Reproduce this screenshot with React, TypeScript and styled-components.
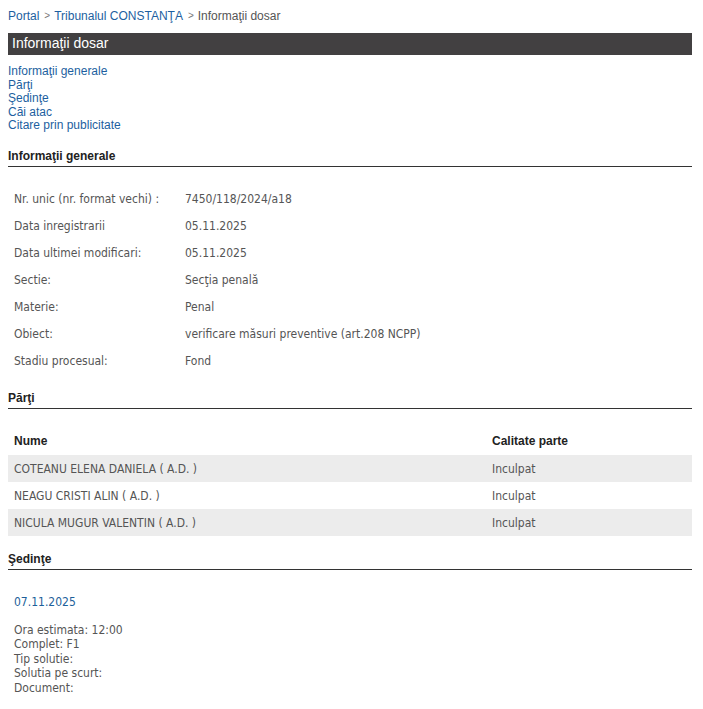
import React from "react";
import styled, { createGlobalStyle } from "styled-components";

const GlobalStyle = createGlobalStyle`
  body {
    margin: 0;
    background: #fff;
    font-family: "Liberation Sans", Arial, sans-serif;
    font-size: 12px;
  }
`;

const Page = styled.div`
  padding: 9px 11px 20px 8px;
`;

const Crumbs = styled.div`
  display: flex;
  align-items: center;
  gap: 4px;
  color: #555;
  font-size: 12px;
  line-height: 14px;
`;

const Link = styled.a`
  color: #1d5fa0;
  text-decoration: none;
  cursor: pointer;
`;

const Sep = styled.span`
  color: #777;
  font-size: 10px;
  padding-left: 1px;
`;

const TitleBar = styled.div`
  margin-top: 10px;
  height: 22px;
  padding-left: 4px;
  background: #424041;
  color: #fff;
  font-size: 14px;
  line-height: 20px;
`;

const Nav = styled.nav`
  display: flex;
  flex-direction: column;
  margin-top: 10px;
  line-height: 13.5px;
`;

const SectionTitle = styled.h2<{ $gap?: number }>`
  margin: ${(p) => p.$gap ?? 17}px 0 0;
  padding-bottom: 2px;
  border-bottom: 1px solid #333;
  color: #222;
  font-size: 12px;
  font-weight: bold;
  line-height: 15px;
`;

const Table = styled.table<{ $gap?: number }>`
  width: 100%;
  table-layout: fixed;
  border-collapse: collapse;
  margin-top: ${(p) => p.$gap ?? 18}px;
  font-family: "DejaVu Sans Condensed", "DejaVu Sans", sans-serif;
  font-stretch: condensed;
  font-size: 12px;
  color: #555;
`;

const Col = styled.col<{ $width?: number }>`
  width: ${(p) => (p.$width ? `${p.$width}px` : "auto")};
`;

const Cell = styled.td`
  height: 26px;
  padding: 1px 6px 0;
  vertical-align: middle;
  white-space: nowrap;
`;

const HeadCell = styled.th`
  height: 26px;
  padding: 0 6px 1px;
  text-align: left;
  font-family: "Liberation Sans", Arial, sans-serif;
  font-weight: bold;
  color: #222;
`;

const Row = styled.tr<{ $shaded?: boolean }>`
  background: ${(p) => (p.$shaded ? "#ececec" : "transparent")};
`;

const Session = styled.div`
  padding: 25px 6px 0;
  font-family: "DejaVu Sans Condensed", "DejaVu Sans", sans-serif;
  font-stretch: condensed;
  font-size: 12px;
  color: #555;
`;

const SessionDate = styled.div`
  color: #1d5f9a;
  line-height: 15px;
`;

const SessionLines = styled.div`
  margin-top: 13px;
  line-height: 14.5px;
`;

const general: [string, string][] = [
  ["Nr. unic (nr. format vechi) :", "7450/118/2024/a18"],
  ["Data inregistrarii", "05.11.2025"],
  ["Data ultimei modificari:", "05.11.2025"],
  ["Sectie:", "Secţia penală"],
  ["Materie:", "Penal"],
  ["Obiect:", "verificare măsuri preventive (art.208 NCPP)"],
  ["Stadiu procesual:", "Fond"],
];

const parties = [
  "COTEANU ELENA DANIELA ( A.D. )",
  "NEAGU CRISTI ALIN ( A.D. )",
  "NICULA MUGUR VALENTIN ( A.D. )",
];

export default function App() {
  return (
    <>
      <GlobalStyle />
      <Page>
        <Crumbs>
          <Link>Portal</Link>
          <Sep>&gt;</Sep>
          <Link>Tribunalul CONSTANŢA</Link>
          <Sep>&gt;</Sep>
          <span>Informaţii dosar</span>
        </Crumbs>

        <TitleBar>Informaţii dosar</TitleBar>

        <Nav>
          <Link>Informaţii generale</Link>
          <Link>Părţi</Link>
          <Link>Şedinţe</Link>
          <Link>Căi atac</Link>
          <Link>Citare prin publicitate</Link>
        </Nav>

        <SectionTitle $gap={16}>Informaţii generale</SectionTitle>
        <Table>
          <colgroup>
            <Col $width={171} />
            <Col />
          </colgroup>
          <tbody>
            {general.map(([label, value]) => (
              <Row key={label}>
                <Cell>{label}</Cell>
                <Cell>{value}</Cell>
              </Row>
            ))}
          </tbody>
        </Table>

        <SectionTitle>Părţi</SectionTitle>
        <Table $gap={19}>
          <colgroup>
            <Col $width={478} />
            <Col />
          </colgroup>
          <thead>
            <tr>
              <HeadCell>Nume</HeadCell>
              <HeadCell>Calitate parte</HeadCell>
            </tr>
          </thead>
          <tbody>
            {parties.map((name, i) => (
              <Row key={name} $shaded={i % 2 === 0}>
                <Cell>{name}</Cell>
                <Cell>Inculpat</Cell>
              </Row>
            ))}
          </tbody>
        </Table>

        <SectionTitle $gap={16}>Şedinţe</SectionTitle>
        <Session>
          <SessionDate>07.11.2025</SessionDate>
          <SessionLines>
            <div>Ora estimata: 12:00</div>
            <div>Complet: F1</div>
            <div>Tip solutie:</div>
            <div>Solutia pe scurt:</div>
            <div>Document:</div>
          </SessionLines>
        </Session>
      </Page>
    </>
  );
}
